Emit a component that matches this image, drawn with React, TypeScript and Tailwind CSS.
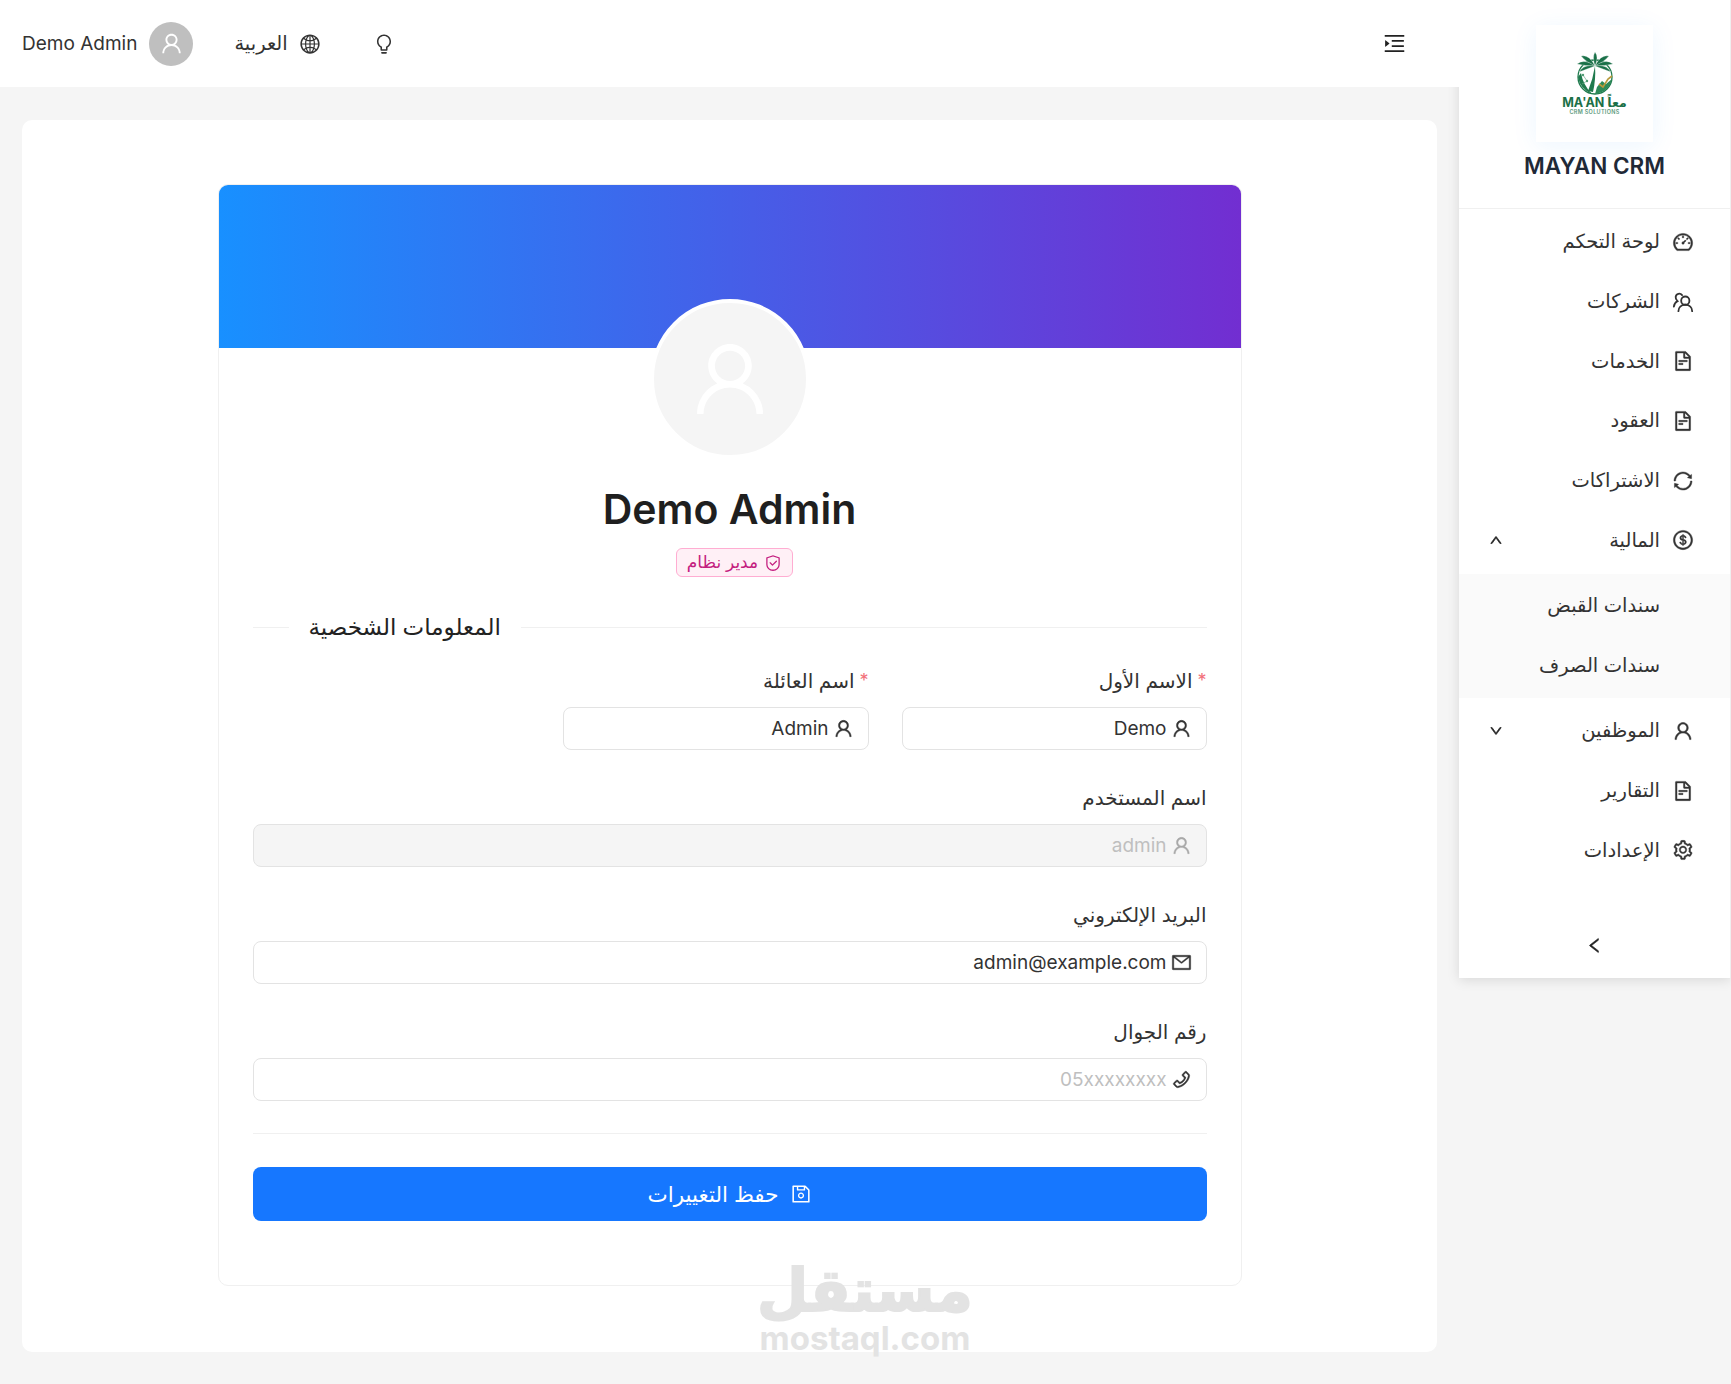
import type { ReactNode } from "react";
import {
  AiOutlineBulb,
  AiOutlineDashboard,
  AiOutlineDollarCircle,
  AiOutlineDown,
  AiOutlineFileText,
  AiOutlineGlobal,
  AiOutlineLeft,
  AiOutlineMail,
  AiOutlineMenuUnfold,
  AiOutlinePhone,
  AiOutlineSafety,
  AiOutlineSave,
  AiOutlineSetting,
  AiOutlineSync,
  AiOutlineUp,
  AiOutlineUser,
} from "react-icons/ai";

const FONT = "[font-family:Inter,'DejaVu_Sans',sans-serif]";

const PALM_LEAVES = [
  "M20 15 Q17 6 20 1 Q24 6 20 15",
  "M20 15 Q14 3 6 5 Q11 11 20 15",
  "M20 15 Q26 3 34 5 Q29 11 20 15",
  "M20 15 Q9 7 2 13 Q10 15 20 15",
  "M20 15 Q31 7 38 13 Q30 15 20 15",
  "M20 15 Q9 13 4 21 Q12 18 20 15",
  "M20 15 Q31 13 36 21 Q28 18 20 15",
];

function TeamIcon() {
  return (
    <svg viewBox="0 0 24 24" width="1em" height="1em" fill="none" stroke="currentColor" strokeLinecap="round">
      <g strokeWidth="2">
        <circle cx="14.5" cy="10.5" r="4.5" />
        <path d="M7 22c0-4 3-7 7.5-7S22 18 22 22" />
        <path d="M11 4.5C9 2 4.5 2.5 4 6.5c-.2 2 .8 3.5 2 4.5C4 12 2.5 14 2 17" />
      </g>
    </svg>
  );
}

function MenuItem({ icon, label, arrow }: { icon: ReactNode; label: string; arrow?: ReactNode }) {
  return (
    <div className="flex h-[59.7px] items-center pr-[36px] pl-[30px] text-[19.5px] text-[#333]">
      <span className="text-[22px] text-[#333] [&_svg]:[stroke-width:20]">{icon}</span>
      <span className="mr-[12px] flex-1">{label}</span>
      {arrow && <span className="text-[14px] text-[#222] [&_svg]:[stroke-width:50]">{arrow}</span>}
    </div>
  );
}

function Logo() {
  return (
    <div className="flex h-[117px] w-[117px] flex-col items-center justify-center bg-white shadow-[0_4px_24px_rgba(24,144,255,0.08)]" dir="ltr">
      <svg viewBox="0 0 40 44" className="h-[44px] w-[40px]">
        <circle cx="20" cy="26" r="17" fill="none" stroke="#1f7a4d" strokeWidth="1.3" />
        <path d="M3 26 Q5 38 17 43 Q8 34 6 22Z" fill="#1f7a4d" />
        <path d="M20 43 Q34 41 37 28 L31 33 L27 30 L22 36Z" fill="#2c8a58" />
        <path d="M20 15 Q18 28 13 40 L18 41 Q21 28 20 15Z" fill="#1f7a4d" />
        {PALM_LEAVES.map((d) => (
          <path key={d} d={d} fill="#1a7048" stroke="#fff" strokeWidth="0.3" />
        ))}
        <path d="M24 33 L28 36 L33 28 L37 25" stroke="#b79a3c" strokeWidth="1.6" fill="none" />
        <path d="M8 24 L12 30 L7 33" stroke="#6aa98a" strokeWidth="0.7" fill="none" />
        <circle cx="8" cy="24" r="1.2" fill="#4f9c74" />
        <circle cx="12" cy="30" r="1.2" fill="#4f9c74" />
      </svg>
      <div className="mt-[1px] flex items-center gap-[3px] text-[12.5px] leading-[13px] font-bold text-[#1b7047]">
        <span>MA'AN</span>
        <span dir="rtl">معاً</span>
      </div>
      <div className="text-[5.5px] leading-[7px] font-semibold tracking-[0.3px] text-[#5c9a7c]">CRM SOLUTIONS</div>
    </div>
  );
}

function Sidebar() {
  return (
    <aside className="h-[978px] w-[272px] shrink-0 border-r border-[#efefef] bg-white shadow-[0_2px_12px_rgba(0,0,0,0.12)]">
      <div className="flex h-[209px] flex-col items-center border-b border-[#f0f0f0] pt-[25px]">
        <Logo />
        <div className="mt-[10px] text-[22.5px] leading-[28px] font-semibold text-[#1f2937]" dir="ltr">MAYAN CRM</div>
      </div>
      <nav className="pt-[3px]">
        <MenuItem icon={<AiOutlineDashboard />} label="لوحة التحكم" />
        <MenuItem icon={<TeamIcon />} label="الشركات" />
        <MenuItem icon={<AiOutlineFileText />} label="الخدمات" />
        <MenuItem icon={<AiOutlineFileText />} label="العقود" />
        <MenuItem icon={<AiOutlineSync />} label="الاشتراكات" />
        <MenuItem icon={<AiOutlineDollarCircle />} label="المالية" arrow={<AiOutlineUp />} />
        <div className="mt-[4px] mb-[3px] bg-[#fafafa] pt-[1px] pb-[3px]">
          <div className="flex h-[60px] items-center pr-[70px] text-[19.5px] text-[#333]">سندات القبض</div>
          <div className="flex h-[60px] items-center pr-[70px] text-[19.5px] text-[#333]">سندات الصرف</div>
        </div>
        <MenuItem icon={<AiOutlineUser />} label="الموظفين" arrow={<AiOutlineDown />} />
        <MenuItem icon={<AiOutlineFileText />} label="التقارير" />
        <MenuItem icon={<AiOutlineSetting />} label="الإعدادات" />
      </nav>
      <div className="mt-[56px] flex justify-center text-[19px] text-[#222] [&_svg]:[stroke-width:30]">
        <AiOutlineLeft />
      </div>
    </aside>
  );
}

function Header() {
  return (
    <header className="flex h-[87px] items-center justify-between bg-white pr-[52px] pl-[22px]">
      <AiOutlineMenuUnfold className="text-[25px] text-[#222]" />
      <div className="flex items-center">
        <AiOutlineBulb className="text-[22px] text-[#333]" />
        <div className="mr-[52px] flex items-center gap-[11px] text-[19.5px] text-[#333]">
          <AiOutlineGlobal className="text-[22px]" />
          <span>العربية</span>
        </div>
        <div className="mr-[41px] flex items-center gap-[12px]">
          <div className="flex h-[44px] w-[44px] items-center justify-center rounded-full bg-[#bfbfbf] text-[25px] text-white">
            <AiOutlineUser />
          </div>
          <span className="pt-[1px] text-[19px] text-[#333]">Demo Admin</span>
        </div>
      </div>
    </header>
  );
}

function Field({ label, required, icon, value, disabled, placeholder }: {
  label: string;
  required?: boolean;
  icon: ReactNode;
  value?: string;
  disabled?: boolean;
  placeholder?: boolean;
}) {
  return (
    <div>
      <div className="flex h-[29px] items-center text-[20px] text-[#333]">
        {required && <span className="ml-[5px] text-[18px] text-[#f2707a]">*</span>}
        <span>{label}</span>
      </div>
      <div
        className={`mt-[12px] flex h-[43px] items-center gap-[4px] rounded-[8px] border border-[#e3e3e3] px-[14px] text-[19px] ${
          disabled ? "bg-[#f5f5f5] text-[#bfbfbf]" : placeholder ? "bg-white text-[#bfbfbf]" : "bg-white text-[#333]"
        }`}
      >
        <span className={`text-[21px] [&_svg]:[stroke-width:20] ${disabled ? "text-[#a8a8a8]" : "text-[#333]"}`}>{icon}</span>
        <span className="pt-[1px]">{value}</span>
      </div>
    </div>
  );
}

function ProfileCard() {
  return (
    <div className="relative w-[1024px] self-start overflow-hidden rounded-[10px] border border-[#f0f0f0] bg-white">
      <div className="h-[163px] bg-[linear-gradient(90deg,#1890ff,#722ed1)]" />
      <div className="-mt-[49px] flex flex-col items-center">
        <div className="relative flex h-[160px] w-[160px] items-center justify-center rounded-full border-[4px] border-white bg-[#f5f5f5] text-[90px] text-white">
          <AiOutlineUser />
        </div>
        <h1 className="mt-[25px] text-[41px] leading-[50px] font-semibold text-[#1f1f1f]" dir="ltr">Demo Admin</h1>
        <div className="mt-[14px] ml-[10px] flex h-[29px] items-center gap-[6px] rounded-[6px] border border-[#ffadd2] bg-[#fff0f6] px-[10px] text-[17px] text-[#c41d7f]">
          <AiOutlineSafety className="text-[18px]" />
          <span>مدير نظام</span>
        </div>
      </div>
      <div className="px-[34px] pb-[64px]">
        <div className="mt-[33px] flex items-center">
          <div className="h-px flex-1 bg-[#f0f0f0]" />
          <div className="mx-[20px] text-[23px] leading-[34px] font-medium text-[#222]">المعلومات الشخصية</div>
          <div className="h-px w-[36px] bg-[#f0f0f0]" />
        </div>
        <div className="mt-[22px] grid grid-cols-[305px_306px] gap-x-[33px]">
          <Field label="الاسم الأول" required icon={<AiOutlineUser />} value="Demo" />
          <Field label="اسم العائلة" required icon={<AiOutlineUser />} value="Admin" />
        </div>
        <div className="mt-[33px] flex flex-col gap-[33px]">
          <Field label="اسم المستخدم" icon={<AiOutlineUser />} value="admin" disabled />
          <Field label="البريد الإلكتروني" icon={<AiOutlineMail />} value="admin@example.com" />
          <Field label="رقم الجوال" icon={<AiOutlinePhone />} value="05xxxxxxxx" placeholder />
        </div>
        <div className="mt-[32px] h-px bg-[#f0f0f0]" />
        <button className="mt-[33px] flex h-[54px] w-full items-center justify-center gap-[11px] rounded-[8px] bg-[#1677ff] text-[21.5px] text-white">
          <AiOutlineSave className="text-[22px]" />
          <span>حفظ التغييرات</span>
        </button>
      </div>
    </div>
  );
}

export default function App() {
  return (
    <div dir="rtl" className={`relative flex h-[1384px] w-[1731px] overflow-hidden bg-[#f5f5f5] ${FONT}`}>
      <Sidebar />
      <div className="flex-1">
        <Header />
        <main className="mx-[22px] mt-[33px] flex h-[1232px] justify-center rounded-[10px] bg-white pt-[64px]">
          <ProfileCard />
        </main>
      </div>
      <div className="pointer-events-none absolute top-[1254px] left-[760px] flex w-[210px] flex-col items-center text-[#e3e3e3]">
        <div className="text-[59px] leading-[71px] font-bold [-webkit-text-stroke:2px_#e3e3e3]">مستقل</div>
        <div className="text-[33px] leading-[26px] font-bold" dir="ltr">mostaql.com</div>
      </div>
    </div>
  );
}
